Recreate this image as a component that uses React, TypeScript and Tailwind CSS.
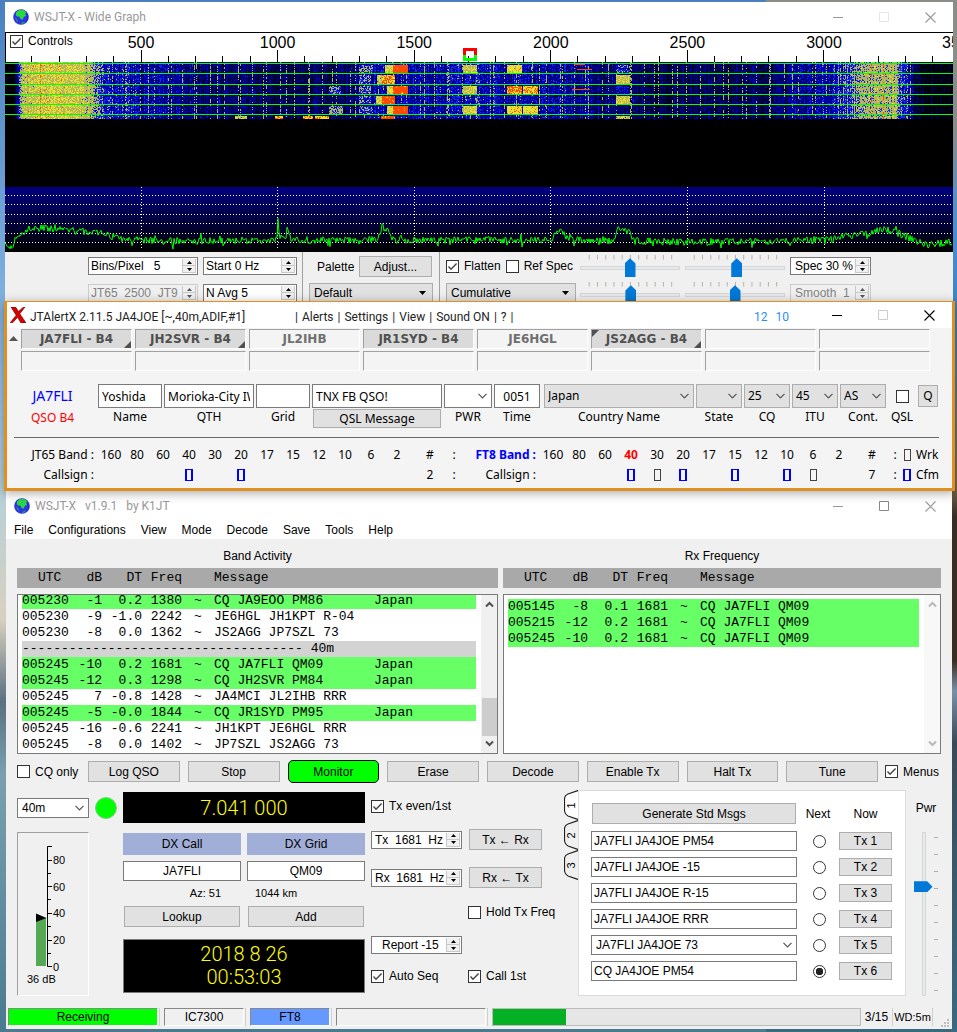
import React from 'react';

const UI = "font-['Liberation_Sans',Arial,sans-serif]";
const TAHOMA = "font-['Noto_Sans',sans-serif]";

/* ---------- icons ---------- */

const GlobeIcon = () => (
  <svg width="16" height="16" viewBox="0 0 16 16" aria-hidden="true">
    <circle cx="8" cy="8" r="7.8" fill="#2c35e8" />
    <path d="M3 3.5 6 1l5 .3 2.5 2.2-1.3 1 .8 2.5-2 .8-1.5 3-2.2-1-1-2.3L4 7.5 2.8 6z" fill="#28d83c" />
    <path d="M2 8.5 4 10l1 3-1.6-1zM8 14l3-1.5 1 1L9 15.5z" fill="#1f9c50" />
    <path d="M13.6 3.6a7.7 7.7 0 0 1-2 10.6A10 10 0 0 0 13.6 3.6z" fill="#1c1f9a" />
  </svg>
);

const RedX = () => (
  <svg width="16" height="16" viewBox="0 0 16 16" aria-hidden="true">
    <path d="M1 0h4.5l3 4.6L13 .5 15 0 9.8 6.8 16 16h-5L7.6 10.3 2.8 15.5.2 15.8 6.2 8.2z" fill="#d80000" stroke="#7a0000" strokeWidth=".7" />
  </svg>
);

const Chevron = ({ className = '' }: { className?: string }) => (
  <svg width="9" height="6" viewBox="0 0 9 6" className={className} aria-hidden="true">
    <path d="M.5.8 4.5 4.8 8.5.8" fill="none" stroke="#555" strokeWidth="1.2" />
  </svg>
);

const SolidArrow = ({ className = '' }: { className?: string }) => (
  <svg width="7" height="4" viewBox="0 0 7 4" className={className} aria-hidden="true">
    <path d="M0 0h7L3.5 4z" fill="#000" />
  </svg>
);

interface WindowButtonsProps {
  color: string;
  maxColor: string;
}

const WindowButtons: React.FC<WindowButtonsProps> = ({ color, maxColor }) => (
  <div className="flex items-center gap-[35px]">
    <button aria-label="Minimize" className="flex h-4 items-center">
      <svg width="11" height="11" viewBox="0 0 11 11"><path d="M0 5.5h10" stroke={color} /></svg>
    </button>
    <button aria-label="Maximize" className="flex h-4 items-center">
      <svg width="11" height="11" viewBox="0 0 11 11"><path d="M.5.5h9v9h-9z" fill="none" stroke={maxColor} /></svg>
    </button>
    <button aria-label="Close" className="flex h-4 items-center">
      <svg width="11" height="11" viewBox="0 0 11 11"><path d="M.5.5l10 10M10.5.5l-10 10" stroke={color} strokeWidth="1.1" /></svg>
    </button>
  </div>
);

/* ---------- form controls ---------- */

interface ButtonProps {
  children: React.ReactNode;
  className?: string;
}

const Btn: React.FC<ButtonProps> = ({ children, className = '' }) => (
  <button className={`flex items-center justify-center border border-[#adadad] bg-[#e1e1e1] whitespace-nowrap ${className}`}>{children}</button>
);

interface CheckProps {
  label: string;
  checked?: boolean;
  className?: string;
}

const Check: React.FC<CheckProps> = ({ label, checked = false, className = '' }) => (
  <label className={`flex items-center gap-[5px] whitespace-nowrap ${className}`}>
    <span className="relative block size-[13px]">
      <input type="checkbox" defaultChecked={checked} className="peer block size-[13px] appearance-none border border-[#333] bg-white" />
      <svg viewBox="0 0 13 13" className="pointer-events-none absolute inset-0 hidden size-[13px] peer-checked:block">
        <path d="M2.5 6.5 5 9.2 10.6 3.4" fill="none" stroke="#444" strokeWidth="1.4" />
      </svg>
    </span>
    {label}
  </label>
);

interface SpinProps {
  label: string;
  value: string;
  className?: string;
  inputClass?: string;
  disabled?: boolean;
}

const Spin: React.FC<SpinProps> = ({ label, value, className = '', inputClass = 'pl-0.5', disabled = false }) => (
  <div className={`flex h-[18px] shrink-0 border ${disabled ? 'border-[#ccc] bg-[#f0f0f0] text-[#838383]' : 'border-[#7a7a7a] bg-white'} ${className}`}>
    <input aria-label={label} defaultValue={value} disabled={disabled} className={`w-full min-w-0 bg-transparent leading-4 outline-none ${inputClass}`} />
    <div className="flex w-4 shrink-0 flex-col p-px">
      {['up', 'down'].map(dir => (
        <button key={dir} disabled={disabled} aria-label={`${label} ${dir}`} className="flex h-[7px] items-center justify-center border-x border-b border-[#c8c8c8] bg-[#f0f0f0]">
          <svg width="5" height="3" viewBox="0 0 5 3"><path d={dir === 'up' ? 'M0 3h5L2.5 0z' : 'M0 0h5L2.5 3z'} fill={disabled ? '#555' : '#000'} /></svg>
        </button>
      ))}
    </div>
  </div>
);

interface ComboProps {
  label: string;
  value: string;
  className?: string;
  selectClass?: string;
  solid?: boolean;
}

const Combo: React.FC<ComboProps> = ({ label, value, className = '', selectClass = 'pl-1', solid = false }) => (
  <div className={`relative ${className}`}>
    <select aria-label={label} className={`block h-full w-full appearance-none bg-transparent outline-none ${selectClass}`}>
      <option>{value}</option>
    </select>
    {solid
      ? <SolidArrow className="pointer-events-none absolute top-1/2 right-1.5 -translate-y-1/2" />
      : <Chevron className="pointer-events-none absolute top-1/2 right-1 -translate-y-1/2" />}
  </div>
);

const HSlider = ({ label, value }: { label: string; value: number }) => (
  <div className="flex h-[22px] w-[100px] flex-col">
    <svg width="100" height="5" viewBox="0 0 100 5" aria-hidden="true">
      {Array.from({ length: 11 }, (_, i) => <path key={i} d={`M${5.5 + i * 9} 0v5`} stroke="#b0aea0" />)}
    </svg>
    <input
      type="range"
      aria-label={label}
      defaultValue={value}
      className="block h-[19px] w-full appearance-none bg-transparent [&::-webkit-slider-runnable-track]:h-1 [&::-webkit-slider-runnable-track]:border [&::-webkit-slider-runnable-track]:border-[#d6d6d6] [&::-webkit-slider-runnable-track]:bg-[#e7eaea] [&::-webkit-slider-thumb]:-mt-[9px] [&::-webkit-slider-thumb]:h-[19px] [&::-webkit-slider-thumb]:w-[11px] [&::-webkit-slider-thumb]:appearance-none [&::-webkit-slider-thumb]:bg-[#0078d7] [&::-webkit-slider-thumb]:[clip-path:polygon(50%_0,100%_28%,100%_100%,0_100%,0_28%)]"
    />
  </div>
);

/* ---------- wide graph ---------- */

const random = (seed: number) => () => {
  seed = (seed * 1664525 + 1013904223) >>> 0;
  return seed / 4294967296;
};

// [frequency px, signal level], linear in between
const BAND: [number, number][] = [
  [0, 0], [9, 0.02], [12, 0.3], [17, 0.58], [40, 0.65], [75, 0.61], [86, 0.55], [96, 0.42], [108, 0.35], [150, 0.33], [200, 0.25], [280, 0.21],
  [340, 0.23], [375, 0.34], [480, 0.34], [560, 0.31], [610, 0.25], [680, 0.21], [760, 0.22], [815, 0.31], [838, 0.42], [862, 0.55],
  [890, 0.56], [897, 0.42], [906, 0.3], [918, 0.12], [948, 0.08],
];

// x, width, slot, level
const SIGNALS: [number, number, number, number][] = [
  [388, 15, 0, 1], [376, 14, 1, 0.86], [388, 15, 2, 1], [376, 14, 3, 0.98], [388, 15, 4, 1], [376, 14, 5, 0.98],
  [380, 8, 0, 0.7], [382, 6, 2, 0.7], [371, 6, 3, 0.66], [382, 6, 4, 0.7], [372, 5, 1, 0.6],
  [354, 14, 0, 0.46], [354, 12, 1, 0.44], [354, 12, 2, 0.46], [354, 12, 3, 0.42], [354, 14, 4, 0.44],
  [458, 14, 0, 0.62], [458, 14, 2, 0.62], [458, 14, 4, 0.66],
  [502, 15, 0, 0.74], [502, 15, 2, 0.88], [502, 15, 4, 0.76], [518, 15, 2, 0.82], [518, 15, 4, 0.74],
  [611, 14, 0, 0.42], [611, 14, 1, 0.62], [611, 14, 3, 0.62], [611, 14, 2, 0.32], [611, 14, 5, 0.58],
  [324, 12, 2, 0.44], [324, 14, 4, 0.5], [230, 12, 5, 0.6], [270, 8, 5, 0.84], [298, 10, 5, 0.84], [310, 14, 5, 0.8],
];

const COLORS = ['#000030', '#00006e', '#0000c0', '#1030f0', '#b4b45a', '#e8e030', '#ff4a00'];

const buildWaterfall = () => {
  const rnd = random(7);
  const paths: string[] = COLORS.map(() => '');
  const columns = Array.from({ length: 948 }, (_, x) => {
    const i = Math.max(1, BAND.findIndex(p => p[0] >= x));
    const [x0, a] = BAND[i - 1];
    const [x1, b] = BAND[i];
    const comb = x % 14 === 9 || x % 23 === 5;
    const base = a + ((b - a) * (x - x0)) / (x1 - x0);
    return { base: base + (rnd() - 0.5) * (base > 0.5 ? 0.07 : 0.14), comb: comb && base > 0.18, hot: x === 35 || x === 866 || x === 878 };
  });
  for (let y = 0; y < 57; y++) {
    const slot = Math.floor((y - 1) / 10.3);
    const inSlot = (y - 1) % 10.3;
    let last = -1;
    let start = 0;
    for (let x = 0; x <= 948; x++) {
      let color = -1;
      if (x < 948) {
        const c = columns[x];
        let v = c.base + (rnd() - 0.5) * 0.22;
        if (x > 22 && x < 60 && rnd() > 0.95) v += 0.25;
        if (c.comb && rnd() > 0.5) v = 0.56;
        if (c.hot && rnd() > 0.6) v = 0.95;
        for (const [sx, w, s, level] of SIGNALS) {
          if (s === slot && x >= sx && x < sx + w && inSlot > 1.4) v = level + (rnd() - 0.5) * 0.28;
        }
        if ((y === 7 && x > 571 && x < 587) || (y === 27 && x > 566 && x < 585) || (y === 2 && x > 568 && x < 580)) v = 1;
        color = v > 0.87 ? 6 : v > 0.64 ? 5 : v > 0.48 ? 4 : v > 0.4 ? 3 : v > 0.3 ? 2 : v > 0.2 ? 1 : v > 0.12 ? 0 : -1;
      }
      if (color !== last) {
        if (last >= 0) paths[last] += `M${start} ${y}.5h${x - start}`;
        last = color;
        start = x;
      }
    }
  }
  return paths;
};

// baseline of the averaged spectrum
const SPECTRUM: [number, number][] = [
  [0, 58], [5, 63], [12, 50], [24, 42], [40, 41], [60, 43], [95, 46], [115, 52], [150, 54], [266, 54], [272, 52], [273, 37], [275, 52],
  [281, 48], [283, 37], [285, 53], [373, 53], [377, 40], [384, 42], [386, 53], [545, 53], [555, 43], [564, 53], [608, 54], [613, 43],
  [624, 44], [629, 54], [680, 55], [780, 54], [830, 52], [850, 47], [866, 46], [878, 42], [892, 46], [910, 54], [922, 58], [947, 55],
];

const buildSpectrum = () => {
  const rnd = random(21);
  let d = '';
  for (let x = 0; x < 948; x++) {
    const i = Math.max(1, SPECTRUM.findIndex(p => p[0] >= x));
    const [x0, a] = SPECTRUM[i - 1];
    const [x1, b] = SPECTRUM[i];
    const y = a + ((b - a) * (x - x0)) / (x1 - x0) + (rnd() - 0.5) * 7 + (rnd() > 0.9 ? (rnd() - 0.5) * 10 : 0);
    d += `${x ? 'L' : 'M'}${x} ${y.toFixed(1)}`;
  }
  return d;
};

const WATERFALL = buildWaterfall();
const TRACE = buildSpectrum();
const HZ = [500, 1000, 1500, 2000, 2500, 3000];

const WideGraphPlot = () => (
  <svg className="block h-[220px] w-full bg-black" viewBox="0 0 948 220" preserveAspectRatio="xMinYMin slice" role="img" aria-label="Waterfall">
    <defs>
      <linearGradient id="spec" x1="0" y1="0" x2="0" y2="1">
        <stop offset="0" stopColor="#000080" />
        <stop offset="1" stopColor="#000000" />
      </linearGradient>
    </defs>
    <rect x="1" y="1" width="947" height="29" fill="#fff" />
    <g shapeRendering="crispEdges" stroke="#000">
      {Array.from({ length: 34 }, (_, i) => i + 1).map(i => (
        <path key={i} d={`M${Math.round(i * 27.3) - 0.5} 30v-${i % 5 ? 6 : 12}`} />
      ))}
    </g>
    <g fontFamily="Liberation Sans" fontSize="16" textAnchor="middle">
      {HZ.map((hz, i) => <text key={hz} x={136 + i * 136.6} y="16">{hz}</text>)}
      <text x="937" y="16" textAnchor="start">35</text>
    </g>
    <path d="M459.5 24v-6.5h11V24" fill="none" stroke="#f00" strokeWidth="3" />
    <path d="M459.5 23v4.5h11V23" fill="none" stroke="#0f0" strokeWidth="3" />
    <g transform="translate(0 30)" shapeRendering="crispEdges">
      {WATERFALL.map((d, i) => <path key={i} d={d} stroke={COLORS[i]} />)}
      <path d="M0 1.5h948M0 11.5h948M0 22.5h948M0 32.5h948M0 42.5h948M0 52.5h948" stroke="#0f0" />
    </g>
    <g transform="translate(0 155)">
      <rect x="0" width="948" height="65" fill="url(#spec)" />
      <g shapeRendering="crispEdges" stroke="#fff" strokeDasharray="1 2">
        <path d="M0 8.5h948M0 17.5h948M0 27.5h948M0 36.5h948M0 46.5h948M0 55.5h948" />
        {HZ.map((hz, i) => <path key={hz} d={`M${Math.round((i + 1) * 136.6) - 0.5} 0v63`} />)}
      </g>
      <path d={TRACE} fill="none" stroke="#0f0" />
    </g>
  </svg>
);

const WideGraph = () => (
  <section className={`mr-1 ml-[5px] bg-[#f0f0f0] text-xs ${UI}`}>
    <header className="flex h-[30px] items-center justify-between bg-white pr-[17px] pl-2">
      <h1 className="flex items-center gap-[5px] font-['Roboto',sans-serif] text-xs text-[#999]"><GlobeIcon />WSJT-X - Wide Graph</h1>
      <WindowButtons color="#999" maxColor="#e6e6e6" />
    </header>
    <div className="relative">
      <WideGraphPlot />
      <Check label="Controls" checked className="absolute top-px left-[5px]" />
    </div>
    <div className="flex h-[49px] items-start overflow-hidden pl-[83px]">
      <div className="grid grid-cols-[110px_94px] gap-x-[5px] gap-y-[9px] pt-[5px]">
        <Spin label="Bins per pixel" value="Bins/Pixel   5" />
        <Spin label="Start" value="Start 0 Hz" />
        <Spin label="JT65 JT9 split" value="JT65  2500  JT9" disabled />
        <Spin label="Average" value="N Avg 5" />
      </div>
      <div className="ml-[5px] h-full w-px bg-[#a0a0a0]" />
      <div className="w-[136px] px-1.5 pt-1">
        <div className="flex items-center justify-between pr-px pl-2">
          <span>Palette</span>
          <Btn className="h-[21px] w-[73px]">Adjust...</Btn>
        </div>
        <Combo label="Palette" value="Default" solid className="mt-1.5 h-5 border border-[#adadad] bg-[#e1e1e1]" />
      </div>
      <div className="h-full w-px bg-[#a0a0a0]" />
      <div className="w-[136px] pt-1.5 pl-1.5">
        <div className="flex gap-[5px] whitespace-nowrap">
          <Check label="Flatten" checked />
          <Check label="Ref Spec" />
        </div>
        <Combo label="Spectrum" value="Cumulative" solid className="mt-[9px] h-5 border border-[#adadad] bg-[#e1e1e1]" />
      </div>
      <div className="grid grid-cols-[100px_100px_81px] gap-x-[5px] gap-y-[5px] pt-[3px] pl-1">
        <HSlider label="Waterfall gain" value={50} />
        <HSlider label="Waterfall zero" value={52} />
        <Spin label="Spectrum height" value="Spec 30 %" className="mt-0.5" inputClass="pl-1" />
        <HSlider label="Spectrum gain" value={51} />
        <HSlider label="Spectrum zero" value={50} />
        <Spin label="Smoothing" value="Smooth  1" className="mt-0.5" inputClass="pl-1" disabled />
      </div>
    </div>
  </section>
);

/* ---------- JTAlert ---------- */

const ALERTS = ['JA7FLI - B4', 'JH2SVR - B4', 'JL2IHB', 'JR1SYD - B4', 'JE6HGL', 'JS2AGG - B4'];
const BANDS = ['160', '80', '60', '40', '30', '20', '17', '15', '12', '10', '6', '2'];

const AlertCell = ({ call = '' }: { call?: string }) => (
  <div className={`relative flex h-5 items-center justify-center border border-t-[#a0a0a0] border-r-white border-b-white border-l-[#a0a0a0] font-['DejaVu_Sans',sans-serif] text-xs font-bold ${call.endsWith('B4') ? 'bg-[#dadada] text-[#505050]' : 'text-[#707070]'}`}>
    {call}
    {['JA7FLI - B4', 'JH2SVR - B4', 'JS2AGG - B4'].includes(call) && (
      <svg width="7" height="7" viewBox="0 0 7 7" className="absolute right-0 bottom-0"><path d="M7 0v7H0z" fill="#505050" /></svg>
    )}
    {call.startsWith('JS2') && (
      <svg width="7" height="7" viewBox="0 0 7 7" className="absolute top-0 left-0"><path d="M0 0h7L0 7z" fill="#505050" /></svg>
    )}
  </div>
);

const Mark = ({ confirmed = false }: { confirmed?: boolean }) => (
  <span className={`mx-auto block h-3 ${confirmed ? 'w-2 border-x-2 border-y border-[#00f]' : 'w-[7px] border border-[#444]'}`} />
);

interface FieldProps {
  label: string;
  width: string;
  children: React.ReactNode;
}

const Field: React.FC<FieldProps> = ({ label, width, children }) => (
  <div className={`flex flex-col items-center ${width}`}>
    {children}
    <span className="mt-px leading-4 whitespace-nowrap">{label}</span>
  </div>
);

const whiteBox = 'h-6 w-full border border-[#7a7a7a] bg-white outline-none';
const grayCombo = 'h-6 w-full border border-[#adadad] bg-[#e1e1e1]';

const JTAlert = () => (
  <section className={`relative mr-0.5 ml-1 border-x-[3px] border-t border-b-[3px] border-[#e09020] bg-[#f4f4f4] text-xs text-black shadow-[0_2px_10px_rgba(0,0,0,0.35)] ${TAHOMA}`}>
    <header className="flex h-[26px] items-center bg-white pr-[17px] pl-[3px] font-['Roboto',sans-serif] text-[#222]">
      <RedX />
      <h1 className="w-[269px] pt-1 pl-1 whitespace-nowrap">JTAlertX 2.11.5 JA4JOE [~,40m,ADIF,#1]</h1>
      <nav className="flex gap-1 pt-1 whitespace-nowrap">
        {['Alerts', 'Settings', 'View', 'Sound ON', '?'].map(item => (
          <React.Fragment key={item}><span>|</span><button>{item}</button></React.Fragment>
        ))}
        <span>|</span>
      </nav>
      <div className="mr-[43px] ml-auto flex gap-2 pt-1 text-[#2a90f0]"><span>12</span><span>10</span></div>
      <WindowButtons color="#000" maxColor="#ccc" />
    </header>

    <div className="flex pt-px">
      <svg width="9" height="5" viewBox="0 0 9 5" className="mt-[7px] ml-0.5 shrink-0" aria-hidden="true"><path d="M0 5h9L4.5 0z" fill="#555" /></svg>
      <div className="ml-[3px] grid flex-1 grid-cols-8 gap-x-[3px] gap-y-0.5 pr-[22px]">
        {Array.from({ length: 16 }, (_, i) => <AlertCell key={i} call={ALERTS[i]} />)}
      </div>
    </div>

    <div className="mt-[13px] flex gap-0.5 pr-3.5">
      <div className="flex w-[89px] flex-col items-center pl-0.5">
        <span className="text-sm leading-6 text-[#00f]">JA7FLI</span>
        <span className="leading-5 text-[#f00]">QSO B4</span>
      </div>
      <Field label="Name" width="w-16"><input aria-label="Name" defaultValue="Yoshida" className={`${whiteBox} px-[3px]`} /></Field>
      <Field label="QTH" width="w-[90px]"><input aria-label="QTH" defaultValue="Morioka-City IWATE" className={`${whiteBox} px-[3px]`} /></Field>
      <Field label="Grid" width="w-[54px]"><input aria-label="Grid" className={whiteBox} /></Field>
      <div className="w-[130px]">
        <input aria-label="Message" defaultValue="TNX FB QSO!" className={`${whiteBox} block px-[3px]`} />
        <Btn className="mx-px mt-px h-[19px] w-32">QSL Message</Btn>
      </div>
      <Field label="PWR" width="w-12"><Combo label="PWR" value="" className={whiteBox} /></Field>
      <Field label="Time" width="w-[46px]"><input aria-label="Time" defaultValue="0051" className={`${whiteBox} text-center`} /></Field>
      <div className="ml-0.5 flex flex-1 gap-0.5">
        <Field label="Country Name" width="flex-1"><Combo label="Country Name" value="Japan" className={grayCombo} selectClass="pl-[3px]" /></Field>
        <Field label="State" width="w-[46px]"><Combo label="State" value="" className={grayCombo} /></Field>
        <Field label="CQ" width="w-[46px]"><Combo label="CQ" value="25" className={grayCombo} selectClass="pl-[3px]" /></Field>
        <Field label="ITU" width="w-[46px]"><Combo label="ITU" value="45" className={grayCombo} selectClass="pl-[3px]" /></Field>
        <Field label="Cont." width="w-[46px]"><Combo label="Continent" value="AS" className={grayCombo} selectClass="pl-[3px]" /></Field>
      </div>
      <label className="flex w-7 flex-col items-center leading-4">
        <span className="flex h-[25px] items-center"><input type="checkbox" className="size-[13px] appearance-none border border-[#333] bg-white" /></span>
        QSL
      </label>
      <Btn className="mt-px h-[22px] w-5">Q</Btn>
    </div>

    <hr className="mx-[7px] mt-[9px] mr-[13px] border-[#696969]" />

    <table className="mt-[7px] mb-[3px] w-full table-fixed text-center [&_td]:h-5 [&_td]:py-0">
      <colgroup>
        <col className="w-[91px]" />
        {BANDS.map(b => <col key={b} className="w-[26px]" />)}
        <col className="w-10" /><col className="w-2" /><col className="w-[82px]" />
        {BANDS.map(b => <col key={b} className="w-[26px]" />)}
        <col className="w-10" /><col className="w-1.5" /><col className="w-[18px]" /><col />
      </colgroup>
      <tbody>
        <tr>
          <td className="pr-1 text-right whitespace-nowrap">JT65 Band :</td>
          {BANDS.map(b => <td key={b}>{b}</td>)}
          <td>#</td><td>:</td>
          <td className="pr-1 text-right font-bold whitespace-nowrap text-[#00f]">FT8 Band :</td>
          {BANDS.map(b => <td key={b} className={b === '40' ? 'font-bold text-[#f00]' : ''}>{b}</td>)}
          <td>#</td><td>:</td><td><Mark /></td><td className="text-left">Wrk</td>
        </tr>
        <tr>
          <td className="pr-1 text-right">Callsign :</td>
          {BANDS.map(b => <td key={b}>{['40', '20'].includes(b) && <Mark confirmed />}</td>)}
          <td>2</td><td>:</td>
          <td className="pr-1 text-right">Callsign :</td>
          {BANDS.map(b => (
            <td key={b}>
              {['40', '20', '15', '10'].includes(b) && <Mark confirmed />}
              {['30', '6'].includes(b) && <Mark />}
            </td>
          ))}
          <td>7</td><td>:</td><td><Mark confirmed /></td><td className="text-left">Cfm</td>
        </tr>
      </tbody>
    </table>
  </section>
);

/* ---------- main window ---------- */

type Decode = [string, string, string, string, string, string];

const BAND_ACTIVITY: (Decode | null)[] = [
  ['005230', '-1', '0.2', '1380', 'CQ JA9EOO PM86', 'Japan'],
  ['005230', '-9', '-1.0', '2242', 'JE6HGL JH1KPT R-04', ''],
  ['005230', '-8', '0.0', '1362', 'JS2AGG JP7SZL 73', ''],
  null,
  ['005245', '-10', '0.2', '1681', 'CQ JA7FLI QM09', 'Japan'],
  ['005245', '-12', '0.3', '1298', 'CQ JH2SVR PM84', 'Japan'],
  ['005245', '7', '-0.8', '1428', 'JA4MCI JL2IHB RRR', ''],
  ['005245', '-5', '-0.0', '1844', 'CQ JR1SYD PM95', 'Japan'],
  ['005245', '-16', '-0.6', '2241', 'JH1KPT JE6HGL RRR', ''],
  ['005245', '-8', '0.0', '1402', 'JP7SZL JS2AGG 73', ''],
];

const RX_FREQUENCY: Decode[] = [
  ['005145', '-8', '0.1', '1681', 'CQ JA7FLI QM09', ''],
  ['005215', '-12', '0.2', '1681', 'CQ JA7FLI QM09', ''],
  ['005245', '-10', '0.2', '1681', 'CQ JA7FLI QM09', ''],
];

interface DecodePaneProps {
  title: string;
  rows: (Decode | null)[];
  scrolled?: boolean;
}

const DecodePane: React.FC<DecodePaneProps> = ({ title, rows, scrolled = false }) => (
  <div className="min-w-0">
    <h2 className="pb-1 text-center leading-4">{title}</h2>
    <div className="flex h-5 items-center bg-[#a9a9a9] pl-[21px] font-['Liberation_Mono',monospace] text-[13px]">
      <span className="w-8">UTC</span>
      <span className="w-8 text-right">dB</span>
      <span className="w-10 text-right">DT</span>
      <span className="w-10 text-right">Freq</span>
      <span className="pl-8">Message</span>
    </div>
    <div className="mt-1.5 flex h-40 overflow-hidden border border-[#7a7a7a] bg-white pl-1">
      <div className={`flex min-w-0 flex-1 flex-col pr-[5px] ${scrolled ? 'justify-end' : 'pt-1'}`}>
        <table aria-label={title} className="w-full table-fixed font-['Liberation_Mono',monospace] text-[13px] leading-4 [&_td]:h-4 [&_td]:p-0 [&_td]:whitespace-nowrap">
          <colgroup>
            <col className="w-12" /><col className="w-8" /><col className="w-10" /><col className="w-10" /><col className="w-8" /><col className="w-40" /><col />
          </colgroup>
          <tbody>
            {rows.map((row, i) => row ? (
              <tr key={i} className={row[4].startsWith('CQ') ? 'bg-[#66ff66]' : ''}>
                <td>{row[0]}</td>
                <td className="text-right">{row[1]}</td>
                <td className="text-right">{row[2]}</td>
                <td className="text-right">{row[3]}</td>
                <td className="text-center">~</td>
                <td>{row[4]}</td>
                <td>{row[5]}</td>
              </tr>
            ) : (
              <tr key={i} className="bg-[#d3d3d3]"><td colSpan={7}>------------------------------------ 40m</td></tr>
            ))}
          </tbody>
        </table>
      </div>
      <div className={`flex w-4 flex-col items-center bg-[#f0f0f0] py-1.5 ${scrolled ? '' : 'opacity-40'}`}>
        <svg width="9" height="7" viewBox="0 0 9 7"><path d="M1 5.5 4.5 2 8 5.5" fill="none" stroke="#505050" strokeWidth="2" /></svg>
        <div className={`mt-auto mb-1 h-[38px] w-[15px] ${scrolled ? 'bg-[#cdcdcd]' : ''}`} />
        <svg width="9" height="7" viewBox="0 0 9 7"><path d="M1 1.5 4.5 5 8 1.5" fill="none" stroke="#505050" strokeWidth="2" /></svg>
      </div>
    </div>
  </div>
);

const Meter = () => (
  <div className="flex h-[164px] w-[72px] flex-col border border-t-[#a0a0a0] border-r-white border-b-white border-l-[#a0a0a0] pt-[7px]">
    <svg width="70" height="132" viewBox="0 0 70 132" role="img" aria-label="Input level">
      <rect x="18" y="78" width="10" height="48" fill="#55a955" />
      <path d="M18 73.500 28.500 78 18 82z" fill="#000" />
      <path d="M34 6.500H29.500V126.500H34M29 20.500h5M29 33.500h4M29 46.500h5M29 59.500h4M29 73.500h5M29 86.500h4M29 100.500h5M29 113.500h4" fill="none" stroke="#000" />
      <g fontFamily="Liberation Sans" fontSize="11">
        <text x="35" y="24">80</text><text x="35" y="51">60</text><text x="35" y="77">40</text><text x="35" y="104">20</text><text x="35" y="131">0</text>
      </g>
    </svg>
    <span className="pl-[9px] text-[11px] leading-[14px]">36 dB</span>
  </div>
);

const TX_MESSAGES = ['JA7FLI JA4JOE PM54', 'JA7FLI JA4JOE -15', 'JA7FLI JA4JOE R-15', 'JA7FLI JA4JOE RRR', 'JA7FLI JA4JOE 73', 'CQ JA4JOE PM54'];

const TxPanel = () => (
  <div className="flex min-w-0 flex-1">
    <div className="flex w-3.5 flex-col">
      {['1', '2', '3'].map(n => (
        <button key={n} className="relative flex h-[30px] items-center justify-center text-[11px]">
          <svg width="14" height="30" viewBox="0 0 14 30" className="absolute inset-0" aria-hidden="true">
            <path d="M14 .5 4 4Q.5 5.500.5 9V20Q.5 24 4 26L14 29.500" fill={n === '1' ? '#fff' : '#f0f0f0'} stroke="#222" strokeWidth="1.2" />
          </svg>
          <span className="relative -rotate-90">{n}</span>
        </button>
      ))}
    </div>
    <div className="flex h-[206px] flex-1 flex-col border border-[#dcdcdc] bg-white pt-3 pr-[13px] pl-3">
      <div className="grid grid-cols-[1fr_42px_53px] items-center">
        <Btn className="mx-px h-[21px]">Generate Std Msgs</Btn>
        <span className="text-center">Next</span>
        <span className="text-center">Now</span>
      </div>
      <div className="mt-[7px] grid grid-cols-[1fr_42px_53px] items-center gap-y-1.5">
        {TX_MESSAGES.map((msg, i) => (
          <React.Fragment key={msg}>
            {i === 4
              ? <Combo label="Tx 5 message" value={msg} className="h-5 border border-[#7a7a7a] bg-white" selectClass="pl-1" />
              : <input aria-label={`Tx ${i + 1} message`} defaultValue={msg} className="h-5 min-w-0 border border-[#7a7a7a] bg-white px-0.5 outline-none" />}
            <input type="radio" name="next" aria-label={`Next Tx ${i + 1}`} defaultChecked={i === 5} className="mx-auto ml-4 size-[13px] appearance-none rounded-full border border-[#333] bg-white checked:bg-[radial-gradient(circle,#222_0_3.5px,transparent_4px)]" />
            <Btn className="h-[18px]">Tx {i + 1}</Btn>
          </React.Fragment>
        ))}
      </div>
    </div>
  </div>
);

const PowerSlider = () => (
  <div className="flex w-11 flex-col items-center pt-2.5 pr-1">
    <label htmlFor="pwr" className="leading-4">Pwr</label>
    <div className="mt-4 flex">
      <input
        id="pwr"
        type="range"
        defaultValue={68}
        className="block h-[164px] w-[19px] appearance-none bg-transparent [direction:rtl] [writing-mode:vertical-lr] [&::-webkit-slider-runnable-track]:w-1 [&::-webkit-slider-runnable-track]:border [&::-webkit-slider-runnable-track]:border-[#d6d6d6] [&::-webkit-slider-runnable-track]:bg-[#e7eaea] [&::-webkit-slider-thumb]:-ml-[9px] [&::-webkit-slider-thumb]:h-[11px] [&::-webkit-slider-thumb]:w-[19px] [&::-webkit-slider-thumb]:appearance-none [&::-webkit-slider-thumb]:bg-[#0078d7] [&::-webkit-slider-thumb]:[clip-path:polygon(0_0,72%_0,100%_50%,72%_100%,0_100%)]"
      />
      <svg width="5" height="164" viewBox="0 0 5 164" aria-hidden="true">
        {Array.from({ length: 10 }, (_, i) => <path key={i} d={`M1 ${5.5 + i * 17}h4`} stroke="#b0aea0" />)}
      </svg>
    </div>
  </div>
);

const Separator = () => <div className="h-[18px] w-px bg-[#d0d0d0]" />;

const sunken = 'flex h-[18px] items-center justify-center border border-t-[#888] border-r-white border-b-white border-l-[#888]';
const lcd = "bg-black font-['Roboto',sans-serif] text-xl font-light text-[#ffff00]";

const MainWindow = () => (
  <section className={`mr-[5px] ml-1.5 bg-[#f0f0f0] text-xs text-black ${UI}`}>
    <header className="bg-white">
      <div className="flex h-[30px] items-center justify-between pr-4 pl-2">
        <h1 className="flex items-center gap-[5px] font-['Roboto',sans-serif] text-xs whitespace-pre text-[#999]"><GlobeIcon />WSJT-X   v1.9.1   by K1JT</h1>
        <WindowButtons color="#999" maxColor="#888" />
      </div>
      <nav className="flex h-[18px] items-center gap-[15px] pl-2">
        {['File', 'Configurations', 'View', 'Mode', 'Decode', 'Save', 'Tools', 'Help'].map(item => <button key={item}>{item}</button>)}
      </nav>
    </header>

    <div className="pt-[9px] pr-[11px] pl-[11px]">
      <div className="grid grid-cols-[481fr_438fr] gap-[5px]">
        <DecodePane title="Band Activity" rows={BAND_ACTIVITY} scrolled />
        <DecodePane title="Rx Frequency" rows={RX_FREQUENCY} />
      </div>

      <div className="mt-1.5 flex items-center">
        <Check label="CQ only" className="w-[71px]" />
        <div className="grid flex-1 grid-cols-8 items-center gap-2">
          {['Log QSO', 'Stop', 'Monitor', 'Erase', 'Decode', 'Enable Tx', 'Halt Tx', 'Tune'].map(name => name === 'Monitor'
            ? <button key={name} className="h-[23px] rounded-[5px] border border-black bg-[#00ff00]">{name}</button>
            : <Btn key={name} className="h-[21px]">{name}</Btn>)}
        </div>
        <Check label="Menus" checked className="ml-[7px] w-14" />
      </div>
    </div>

    <div className="mt-[7px] flex pr-0.5 pl-[11px]">
      <div className="w-[100px] pt-[7px]">
        <div className="flex items-center gap-1.5">
          <Combo label="Band" value="40m" className="h-5 w-[72px] border border-[#7a7a7a] bg-white" />
          <div className="size-[22px] rounded-full border border-[#8c8] bg-[#00ff00]" />
        </div>
        <div className="mt-[13px]"><Meter /></div>
      </div>

      <div className="ml-1.5 w-[242px] pt-0.5">
        <div className={`flex h-[31px] items-center justify-center ${lcd}`}>7.041 000</div>
        <div className="mt-2.5 grid grid-cols-2 gap-x-1.5 text-center">
          <label htmlFor="dxcall" className="bg-[#a0aed8] leading-[22px]">DX Call</label>
          <label htmlFor="dxgrid" className="bg-[#a0aed8] leading-[22px]">DX Grid</label>
          <input id="dxcall" defaultValue="JA7FLI" className="mt-1.5 h-5 min-w-0 border border-[#7a7a7a] bg-white text-center outline-none" />
          <input id="dxgrid" defaultValue="QM09" className="mt-1.5 h-5 min-w-0 border border-[#7a7a7a] bg-white text-center outline-none" />
          <span className="pt-1 pr-5 text-right text-[11px] leading-4">Az: 51</span>
          <span className="pt-1 pl-2 text-left text-[11px] leading-4">1044 km</span>
          <Btn className="mx-px mt-[5px] h-[21px]">Lookup</Btn>
          <Btn className="mx-px mt-[5px] h-[21px]">Add</Btn>
        </div>
        <div className={`mt-3 flex h-[54px] flex-col items-center justify-center border border-[#7a7a7a] ${lcd}`}>
          <span className="leading-[23px]">2018 8 26</span>
          <span className="leading-[23px]">00:53:03</span>
        </div>
      </div>

      <div className="ml-1.5 w-[193px] pt-2">
        <Check label="Tx even/1st" checked className="h-4" />
        <div className="mt-[15px] flex items-center gap-[7px]">
          <Spin label="Tx frequency" value="Tx  1681  Hz" className="w-[91px]" inputClass="pl-[3px]" />
          <Btn className="h-[21px] w-[73px]">Tx ← Rx</Btn>
        </div>
        <div className="mt-[17px] flex items-center gap-[7px]">
          <Spin label="Rx frequency" value="Rx  1681  Hz" className="w-[91px]" inputClass="pl-[3px]" />
          <Btn className="h-[21px] w-[73px]">Rx ← Tx</Btn>
        </div>
        <Check label="Hold Tx Freq" className="mt-4 ml-[97px] h-4" />
        <Spin label="Report" value="Report -15" className="mt-4 w-[91px]" inputClass="pl-2.5" />
        <div className="mt-3.5 flex h-4">
          <Check label="Auto Seq" checked className="w-[97px]" />
          <Check label="Call 1st" checked />
        </div>
      </div>

      <TxPanel />
      <PowerSlider />
    </div>

    <footer className="mt-3 flex h-[21px] items-start pr-[3px] pb-px pl-0.5">
      <div className={`${sunken} w-[150px] bg-[#00ff00]`}>Receiving</div>
      <div className="mr-1 ml-px"><Separator /></div>
      <div className={`${sunken} w-20`}>IC7300</div>
      <div className="mr-1 ml-px"><Separator /></div>
      <div className={`${sunken} w-20 bg-[#6699ff]`}>FT8</div>
      <div className="mr-1 ml-px"><Separator /></div>
      <div className={`${sunken} w-[150px]`} />
      <div className="mr-1 ml-px"><Separator /></div>
      <div role="progressbar" aria-label="Sequence" aria-valuenow={3} aria-valuemax={15} className="h-[18px] flex-1 border border-[#bcbcbc] bg-[#e6e6e6]">
        <div className="h-full w-1/5 bg-[#06b025]" />
      </div>
      <span className="w-[31px] text-center leading-[18px]">3/15</span>
      <Separator />
      <span className="w-[39px] text-center text-[11px] leading-[18px]">WD:5m</span>
      <Separator />
      <svg width="8" height="8" viewBox="0 0 8 8" className="mt-[11px] ml-2" aria-hidden="true">
        <path d="M6 0h2v2H6zM3 3h2v2H3zM6 3h2v2H6zM0 6h2v2H0zM3 6h2v2H3zM6 6h2v2H6z" fill="#bfbfbf" />
      </svg>
    </footer>
  </section>
);

const App = () => (
  <div className="min-h-screen bg-[linear-gradient(#4a80c0,#7fb0e0_29%,#b8d0d8_48%,#d8d0c0_60%,#5a7080_68%,#7aa0b0_75%,#4a7a90)]">
    <div className="min-h-screen bg-[linear-gradient(#8a8c88,#8a8c88_12%,#4a90d0_22%,#3a80c0_32%,#7a6a50_47%,#3a2e22_50%,#3a2e22_64%,#7a90a8_67%,#3a4a58_72%,#3a6a80)] bg-[length:20%_100%] bg-right bg-no-repeat pt-0.5">
      <WideGraph />
      <JTAlert />
      <MainWindow />
    </div>
  </div>
);

export default App;
